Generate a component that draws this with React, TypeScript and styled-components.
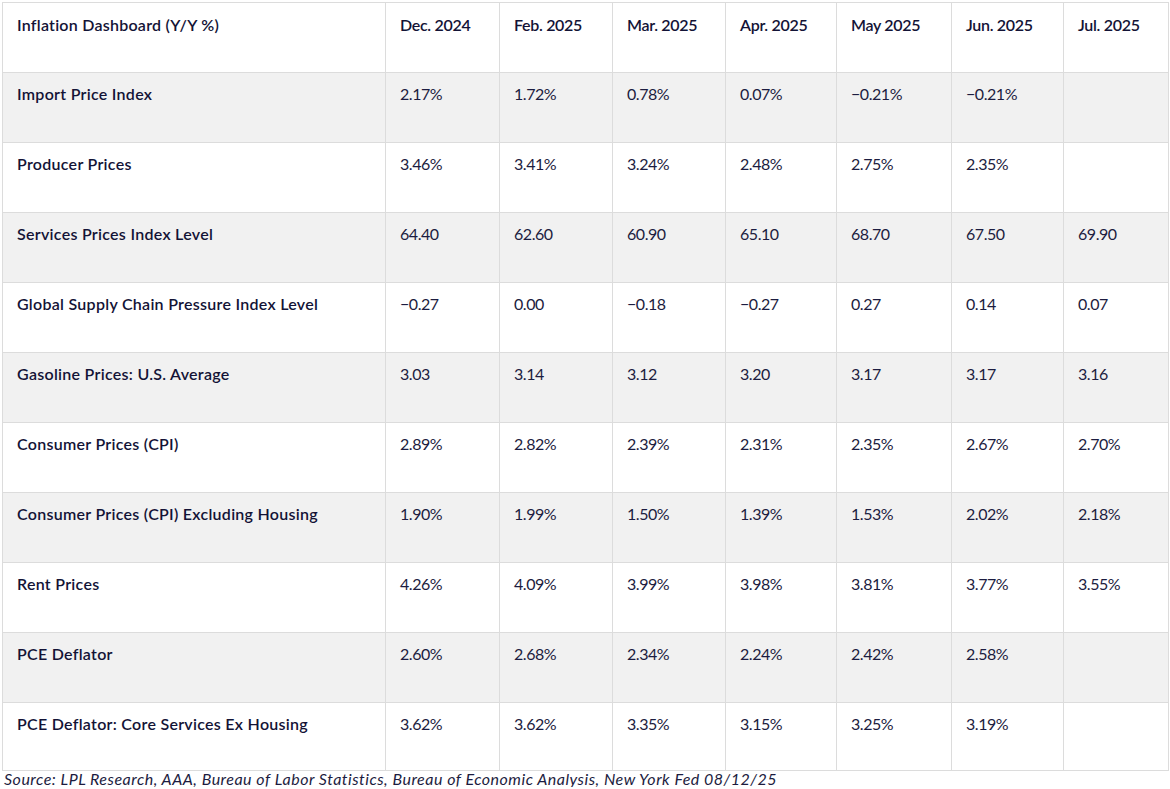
import React from 'react';
import styled, { createGlobalStyle } from 'styled-components';

const GlobalStyle = createGlobalStyle`
	body {
		margin: 0;
		background: #ffffff;
		font-family: Lato, 'Noto Sans', sans-serif;
		color: #17173a;
	}
`;

const columns = ['Dec. 2024', 'Feb. 2025', 'Mar. 2025', 'Apr. 2025', 'May 2025', 'Jun. 2025', 'Jul. 2025'];
const widths = [383, 114, 113, 113, 111, 115, 112, 105];

const rows: { label: string; values: string[] }[] = [
	{ label: 'Import Price Index', values: ['2.17%', '1.72%', '0.78%', '0.07%', '−0.21%', '−0.21%', ''] },
	{ label: 'Producer Prices', values: ['3.46%', '3.41%', '3.24%', '2.48%', '2.75%', '2.35%', ''] },
	{ label: 'Services Prices Index Level', values: ['64.40', '62.60', '60.90', '65.10', '68.70', '67.50', '69.90'] },
	{ label: 'Global Supply Chain Pressure Index Level', values: ['−0.27', '0.00', '−0.18', '−0.27', '0.27', '0.14', '0.07'] },
	{ label: 'Gasoline Prices: U.S. Average', values: ['3.03', '3.14', '3.12', '3.20', '3.17', '3.17', '3.16'] },
	{ label: 'Consumer Prices (CPI)', values: ['2.89%', '2.82%', '2.39%', '2.31%', '2.35%', '2.67%', '2.70%'] },
	{ label: 'Consumer Prices (CPI) Excluding Housing', values: ['1.90%', '1.99%', '1.50%', '1.39%', '1.53%', '2.02%', '2.18%'] },
	{ label: 'Rent Prices', values: ['4.26%', '4.09%', '3.99%', '3.98%', '3.81%', '3.77%', '3.55%'] },
	{ label: 'PCE Deflator', values: ['2.60%', '2.68%', '2.34%', '2.24%', '2.42%', '2.58%', ''] },
	{ label: 'PCE Deflator: Core Services Ex Housing', values: ['3.62%', '3.62%', '3.35%', '3.15%', '3.25%', '3.19%', ''] },
];

const App = () => {
	return (
		<Page>
			<GlobalStyle />
			<Table>
				<colgroup>
					{widths.map((w, i) => (
						<col key={i} style={{ width: `${w}px` }} />
					))}
				</colgroup>
				<thead>
					<Row $shaded={false}>
						<HeadCell $title>Inflation Dashboard (Y/Y %)</HeadCell>
						{columns.map((c) => (
							<HeadCell key={c} $title={false}>
								{c}
							</HeadCell>
						))}
					</Row>
				</thead>
				<tbody>
					{rows.map((r, i) => (
						<Row key={r.label} $shaded={i % 2 === 0}>
							<LabelCell>{r.label}</LabelCell>
							{r.values.map((v, j) => (
								<ValueCell key={j}>{v}</ValueCell>
							))}
						</Row>
					))}
				</tbody>
			</Table>
			<Source>
				Source: LPL Research, AAA, Bureau of Labor Statistics, Bureau of Economic Analysis, New York Fed 08/12/25
			</Source>
		</Page>
	);
};

export default App;

const Page = styled.div`
	padding: 2px 0 0 2px;
	width: 1168px;
`;

const Table = styled.table`
	border-collapse: collapse;
	table-layout: fixed;
	width: 1166px;
	border: 1px solid #dcdcdc;

	tbody tr:last-child {
		height: 68px;
	}
`;

const Row = styled.tr<{ $shaded: boolean }>`
	height: 70px;
	background: ${(p) => (p.$shaded ? '#f1f1f1' : '#ffffff')};
`;

const Cell = styled.td`
	border: 1px solid #dcdcdc;
	padding: 9px 14px 0 14px;
	vertical-align: top;
	font-size: 16px;
	line-height: 24px;
	white-space: nowrap;
`;

const HeadCell = styled(Cell).attrs({ as: 'th' })<{ $title: boolean }>`
	padding-top: 10px;
	text-align: left;
	font-weight: 600;
	letter-spacing: ${(p) => (p.$title ? '0.25px' : '-0.3px')};
	color: #131336;
`;

const LabelCell = styled(Cell)`
	font-weight: 600;
	letter-spacing: 0.28px;
	color: #131336;
`;

const ValueCell = styled(Cell)`
	font-weight: 400;
	letter-spacing: -0.45px;
	color: #1c1c40;
`;

const Source = styled.div`
	padding: 0 0 0 2px;
	font-style: italic;
	font-size: 16px;
	line-height: 16px;
	letter-spacing: 0.5px;
	color: #1c1c40;
`;
